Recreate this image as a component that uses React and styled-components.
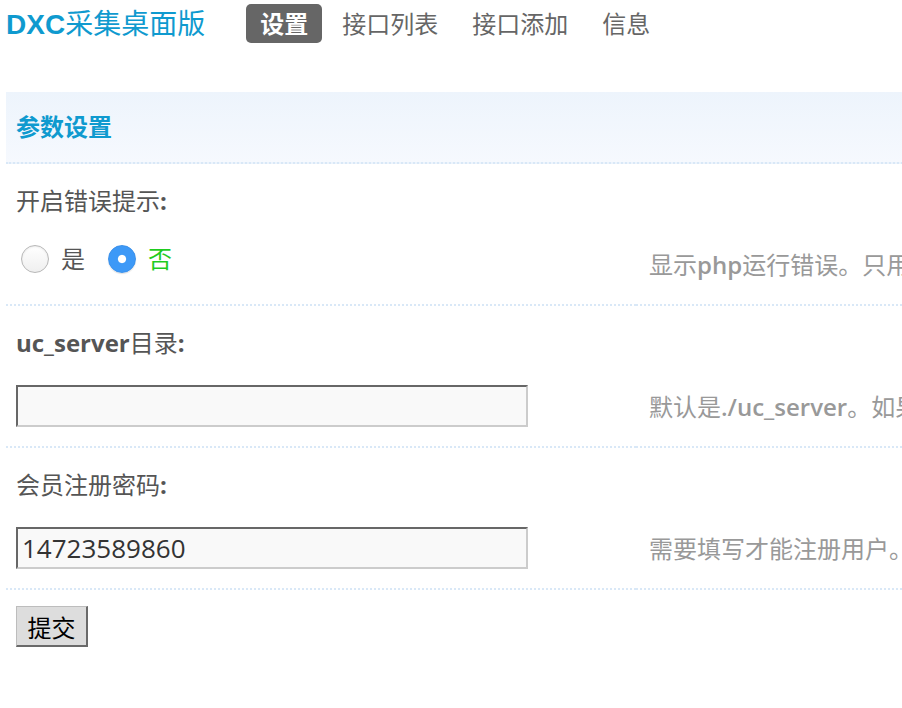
import React from "react";
import styled, { createGlobalStyle, css } from "styled-components";

const GlobalStyle = createGlobalStyle`
  html, body {
    margin: 0;
    padding: 0;
    background: #fff;
    overflow: hidden;
  }
  body {
    font-family: "Open Sans", "Noto Sans CJK SC", sans-serif;
    font-size: 24px;
  }
  * { box-sizing: border-box; }
`;

const CJK = `"Open Sans", "Noto Sans CJK SC", sans-serif`;
const DOT = "2px dotted #d9e8f7";

const Page = styled.div`
  width: 100%;
  overflow: hidden;
  padding-left: 6px;
`;

const TopBar = styled.header`
  display: flex;
  align-items: center;
  height: 39px;
  margin: 4px 0 49px;
`;

const Logo = styled.div`
  font-family: "Liberation Sans", "Noto Sans CJK SC", sans-serif;
  font-size: 28px;
  line-height: 39px;
  font-weight: 700;
  color: #0f9acf;
  white-space: nowrap;
  span {
    font-weight: 400;
    font-family: "Noto Sans CJK SC", sans-serif;
  }
`;

const Nav = styled.nav`
  display: flex;
  gap: 6px;
  margin-left: 41px;
`;

const NavItem = styled.a`
  display: block;
  height: 39px;
  padding: 0 14px;
  line-height: 39px;
  font-family: ${CJK};
  font-size: 24px;
  color: #666;
  text-decoration: none;
  border-radius: 5px;
  white-space: nowrap;
  ${(p) =>
    p.$active &&
    css`
      background: #666;
      color: #fff;
      font-weight: 700;
    `}
`;

const Panel = styled.section`
  width: 1400px;
`;

const TitleBar = styled.h2`
  margin: 0;
  padding: 19px 10px;
  line-height: 32px;
  font-size: 24px;
  font-weight: 700;
  color: #0f9acf;
  background: linear-gradient(#edf4fc, #f6f9fe);
  border-bottom: ${DOT};
`;

const Label = styled.div`
  padding: 21px 10px;
  line-height: 32px;
  font-size: 24px;
  color: #555;
  b { font-weight: 700; }
`;

const ValueRow = styled.div`
  display: grid;
  grid-template-columns: 630px 1fr;
`;

const ValueCell = styled.div`
  display: flex;
  align-items: flex-start;
  height: 68px;
  padding: 5px 10px 0;
  border-bottom: ${DOT};
`;

const TipCell = styled.div`
  padding: 11px 13px 0;
  line-height: 32px;
  font-size: 24px;
  color: #999;
  white-space: nowrap;
  border-bottom: ${DOT};
  b { font-weight: 600; }
`;

const RadioGroup = styled.div`
  display: flex;
  align-items: center;
  height: 32px;
`;

const RadioOption = styled.label`
  display: flex;
  align-items: center;
  gap: 12px;
  margin-right: 18px;
  font-size: 24px;
  line-height: 32px;
  color: ${(p) => (p.$on ? "#1fcc1f" : "#555")};
`;

const Radio = styled.input.attrs({ type: "radio" })`
  appearance: none;
  -webkit-appearance: none;
  width: 28px;
  height: 28px;
  margin: 0 0 0 5px;
  border-radius: 50%;
  border: 1px solid #b8b8b8;
  background: linear-gradient(#ffffff, #efefef);
  box-shadow: inset 0 1px 2px rgba(0, 0, 0, 0.08);
  &:checked {
    border: 1px solid #3a90ea;
    background: radial-gradient(circle, #fff 0 3.6px, #3d99f7 4.6px);
    box-shadow: 0 1px 1px rgba(0, 0, 0, 0.12);
  }
`;

const TextInput = styled.input.attrs({ type: "text" })`
  width: 512px;
  height: 42px;
  margin: 0;
  padding: 0 4px;
  border-style: solid;
  border-width: 2px;
  border-color: #676767 #cccccc #cccccc #676767;
  background: #f9f9f9;
  font-family: "Open Sans", sans-serif;
  font-size: 26px;
  color: #333;
  outline: none;
`;

const ButtonRow = styled.div`
  padding: 16px 10px;
`;

const SubmitButton = styled.button`
  width: 72px;
  height: 41px;
  padding: 0;
  background: #dddddd;
  border-style: solid;
  border-width: 1px 2px 2px 1px;
  border-color: #bdbdbd #6a6a6a #6a6a6a #bdbdbd;
  font-family: "Noto Sans CJK SC", sans-serif;
  font-size: 24px;
  color: #000;
`;

const items = [
  {
    label: (
      <>
        开启错误提示<b>:</b>
      </>
    ),
    type: "radio",
    tip: (
      <>
        显示<b>php</b>运行错误。只用于调试
      </>
    ),
  },
  {
    label: (
      <>
        <b>uc_server</b>目录<b>:</b>
      </>
    ),
    type: "text",
    value: "",
    tip: (
      <>
        默认是<b>./uc_server</b>。如果
      </>
    ),
  },
  {
    label: (
      <>
        会员注册密码<b>:</b>
      </>
    ),
    type: "text",
    value: "14723589860",
    tip: "需要填写才能注册用户。",
  },
];

export default function App() {
  const [err, setErr] = React.useState("0");
  return (
    <>
      <GlobalStyle />
      <Page>
        <TopBar>
          <Logo>
            DXC<span>采集桌面版</span>
          </Logo>
          <Nav>
            <NavItem $active>设置</NavItem>
            <NavItem>接口列表</NavItem>
            <NavItem>接口添加</NavItem>
            <NavItem>信息</NavItem>
          </Nav>
        </TopBar>
        <Panel>
          <TitleBar>参数设置</TitleBar>
          {items.map((it, i) => (
            <div key={i}>
              <Label>{it.label}</Label>
              <ValueRow>
                <ValueCell>
                  {it.type === "radio" ? (
                    <RadioGroup>
                      <RadioOption $on={err === "1"}>
                        <Radio
                          name="err"
                          checked={err === "1"}
                          onChange={() => setErr("1")}
                        />
                        是
                      </RadioOption>
                      <RadioOption $on={err === "0"}>
                        <Radio
                          name="err"
                          checked={err === "0"}
                          onChange={() => setErr("0")}
                        />
                        否
                      </RadioOption>
                    </RadioGroup>
                  ) : (
                    <TextInput defaultValue={it.value} />
                  )}
                </ValueCell>
                <TipCell>{it.tip}</TipCell>
              </ValueRow>
            </div>
          ))}
          <ButtonRow>
            <SubmitButton>提交</SubmitButton>
          </ButtonRow>
        </Panel>
      </Page>
    </>
  );
}
